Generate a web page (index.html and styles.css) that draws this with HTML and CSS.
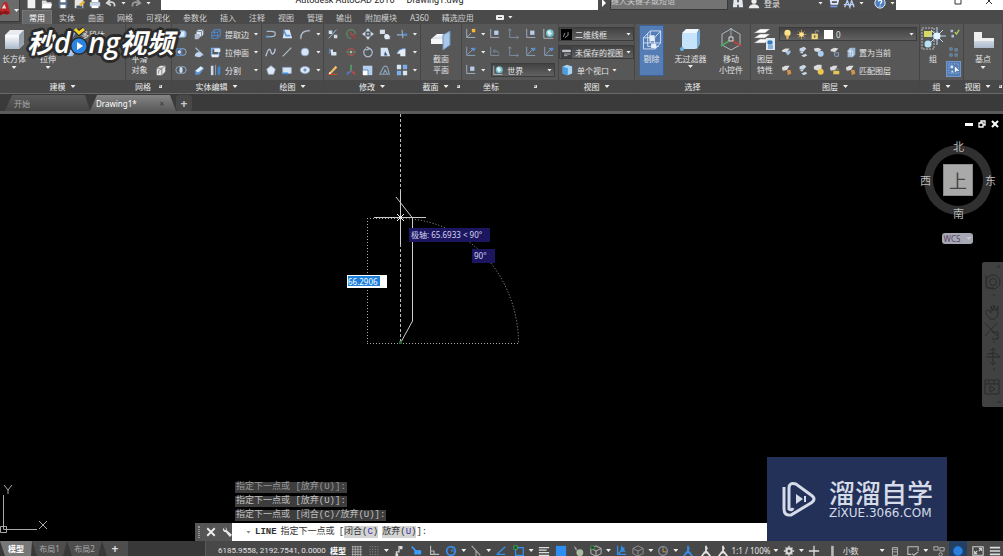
FILE: index.html
```html
<!DOCTYPE html>
<html lang="zh-CN">
<head>
<meta charset="utf-8">
<title>Autodesk AutoCAD 2016 Drawing1.dwg</title>
<link rel="stylesheet" href="styles.css">
</head>
<body>
<svg class="defs" aria-hidden="true">
  <defs>
    <linearGradient id="gw" x1="0" y1="0" x2="0" y2="1"><stop offset="0" stop-color="#fff"/><stop offset="1" stop-color="#a9b9cc"/></linearGradient>
    <linearGradient id="gb" x1="0" y1="0" x2="1" y2="1"><stop offset="0" stop-color="#f4f9ff"/><stop offset="1" stop-color="#7fa9d8"/></linearGradient>
    <symbol id="new" viewBox="0 0 14 14"><path d="M3 1h6l3 3v9H3z" fill="#f2f2f2"/></symbol>
    <symbol id="open" viewBox="0 0 14 14"><path d="M1 4h5l1 2h5v7H1z" fill="#ddd"/><path d="M3 8h10l-2 5H1z" fill="#fff"/></symbol>
    <symbol id="save" viewBox="0 0 14 14"><path d="M2 2h10v11H2z" fill="#59708d"/><path d="M4 2h6v4H4zM4 9h6v4H4z" fill="#fff"/></symbol>
    <symbol id="saveas" viewBox="0 0 14 14"><path d="M2 2h10v11H2z" fill="#e6e6e6"/><path d="M4 10h7v3H4z" fill="#456"/><path d="M7 9l5-5 2 2-5 5z" fill="#e8b63c"/></symbol>
    <symbol id="print" viewBox="0 0 14 14"><path d="M3 2h8v4H3z" fill="#fff"/><path d="M1 6h12v5H1z" fill="#c4d4e5"/><path d="M3 10h8v3H3z" fill="#fff"/></symbol>
    <symbol id="undo" viewBox="0 0 14 14"><path d="M11 11c1-5-3-6-7-4M6 3L2 7l5 3" fill="none" stroke="#d5d5d5" stroke-width="2"/></symbol>
    <symbol id="redo" viewBox="0 0 14 14"><path d="M3 11c-1-5 3-6 7-4M8 3l4 4-5 3" fill="none" stroke="#9a9a9a" stroke-width="2"/></symbol>
    <symbol id="bino" viewBox="0 0 14 14"><path d="M2 2h4v4h2V2h4l1 10H8V9H6v3H1z" fill="#e3e8ee"/></symbol>
    <symbol id="user" viewBox="0 0 14 14"><circle cx="7" cy="5" r="3" fill="#eee"/><path d="M1 13c0-6 12-6 12 0z" fill="#eee"/></symbol>
    <symbol id="cart" viewBox="0 0 14 14"><path d="M1 2h3l1 6h7l1-4H4" fill="none" stroke="#dfe9ff" stroke-width="2"/><path d="M4 10h8v2H4z" fill="#7199e7"/></symbol>
    <symbol id="net" viewBox="0 0 14 14"><path d="M2 12l3-8 3 8 2-8 3 8M1 9h12" fill="none" stroke="#b9cef5" stroke-width="1.5"/></symbol>
    <symbol id="help" viewBox="0 0 14 14"><circle cx="7" cy="7" r="6" fill="#4b7fc4" stroke="#fff"/><path d="M5 5q2-3 4 0q0 2-2 3M7 10v1" fill="none" stroke="#fff" stroke-width="1.5"/></symbol>
    <symbol id="logoA" viewBox="0 0 16 20"><path d="M0 9L4 0h4l4 13-4 1-2-4-4 1-2 2z" fill="#c22424"/><path d="M2 7l3-5 2 5z" fill="#ddd"/><path d="M0 10l3 1 3-2 5 3-3 2-4-1-4 2z" fill="#8d1515"/></symbol>
    <symbol id="cube" viewBox="0 0 28 28"><path d="M5 10l5-5h14v14l-5 5H5z" fill="#e9edf2"/><path d="M5 10h14v14H5z" fill="url(#gw)"/><path d="M19 10l5-5v14l-5 5z" fill="#98a2ae"/></symbol>
    <symbol id="extrude" viewBox="0 0 28 28"><path d="M6 10l7-5 9 4v12l-8 4-8-5z" fill="url(#gb)"/><path d="M14 13v12" stroke="#778"/></symbol>
    <symbol id="face" viewBox="0 0 14 14"><path d="M2 8l6-5 4 3-3 6H3z" fill="url(#gb)"/></symbol>
    <symbol id="mesh" viewBox="0 0 14 14"><path d="M2 5l4-3h6v7l-4 4H2z" fill="#e4e4e4"/><path d="M2 5h6v8M8 5l4-3M4 11c0-4 2-5 4-5" fill="none" stroke="#777"/></symbol>
    <symbol id="union" viewBox="0 0 14 14"><circle cx="5" cy="7" r="4.500" fill="#c5d4e7"/><circle cx="9" cy="7" r="4.500" fill="#8db2dd"/><path d="M3 4h8v6H3z" fill="#e2ecf8"/></symbol>
    <symbol id="subtract" viewBox="0 0 14 14"><circle cx="9" cy="7" r="4" fill="none" stroke="#9bb9dc"/><path d="M2 3h6v8H2z" fill="none" stroke="#4f8fdc"/><circle cx="5" cy="7" r="2" fill="#d9e6f5"/></symbol>
    <symbol id="intersect" viewBox="0 0 14 14"><circle cx="5" cy="7" r="4" fill="none" stroke="#9bb9dc"/><circle cx="9" cy="7" r="4" fill="none" stroke="#9bb9dc"/><path d="M7 4v6" stroke="#e6f2ff" stroke-width="2"/></symbol>
    <symbol id="copyface" viewBox="0 0 14 14"><path d="M6 2h6v6l-2 2H4V4z" fill="#dfe8f2"/><path d="M2 7h6v4l-2 2H2z" fill="#aebdce"/><path d="M4 4h6v6M10 4l2-2" fill="none" stroke="#667789"/></symbol>
    <symbol id="slice" viewBox="0 0 14 14"><path d="M3 2l9 9" stroke="#9cb1cc" stroke-width="1.500"/><path d="M2 12q0-5 6-5l3 2q-1 4-4 4z" fill="#c1d6ee"/></symbol>
    <symbol id="thick" viewBox="0 0 14 14"><path d="M2 8l7-6 4 3-5 7-5 1z" fill="#5d92cf"/><path d="M3 8l6-5 3 2-6 5z" fill="#e8f1fa"/></symbol>
    <symbol id="edge" viewBox="0 0 14 14"><path d="M2 5l3-3h7v7l-3 3H2zM2 5h7v7M9 5l3-3M5 2v7H2M5 9h7" fill="none" stroke="#4f8fdc"/></symbol>
    <symbol id="extface" viewBox="0 0 14 14"><path d="M2 3h8v8H2z" fill="none" stroke="#79abe6" stroke-width="2"/><path d="M5 3h7v4H5zM2 10h8v3H2z" fill="#e5eef8"/></symbol>
    <symbol id="split" viewBox="0 0 14 14"><path d="M1 2h3v11H1z" fill="#cad9eb"/><path d="M9 4l3-2v10l-3 1z" fill="#3f89d9"/><path d="M6.500 1v12" stroke="#9ab"/></symbol>
    <symbol id="pline" viewBox="0 0 14 14"><path d="M2 4h6q4 0 4 3t-4 3H2" fill="none" stroke="#a8b8cc" stroke-width="1.500"/><path d="M1 10h4" stroke="#5f9be0" stroke-width="2"/></symbol>
    <symbol id="helix" viewBox="0 0 14 14"><path d="M4 2h6l3 10H2z" fill="#dbe8f7"/><path d="M3 2l3 7h5" fill="none" stroke="#5b94da" stroke-width="2"/></symbol>
    <symbol id="arc" viewBox="0 0 14 14"><path d="M2 12Q2 3 12 3" fill="none" stroke="#b6c3d4" stroke-width="1.500"/><path d="M1 11h2v2H1zM11 2h2v2h-2z" fill="#999"/></symbol>
    <symbol id="spline" viewBox="0 0 14 14"><path d="M1 12C4 1 6 3 7 7s4 3 5-4" fill="none" stroke="#b8c7d9" stroke-width="1.500"/></symbol>
    <symbol id="line" viewBox="0 0 14 14"><path d="M2 12L12 2" stroke="#bac5d2" stroke-width="1.200"/></symbol>
    <symbol id="circle" viewBox="0 0 14 14"><circle cx="7" cy="7" r="4.500" fill="#d9e7f5" stroke="#8dabd0"/></symbol>
    <symbol id="polygon" viewBox="0 0 14 14"><path d="M7 2l5 4-2 6H4L2 6z" fill="#e0e9f5" stroke="#9db1ca"/></symbol>
    <symbol id="rect" viewBox="0 0 14 14"><path d="M2 4h10v7H2z" fill="#d9e4f1" stroke="#92aed0"/><path d="M2 11h6" stroke="#348be8" stroke-width="2"/></symbol>
    <symbol id="ellipse" viewBox="0 0 14 14"><ellipse cx="7" cy="7" rx="5.500" ry="4" fill="#dfe9f5" stroke="#91aed2"/><path d="M5 7h4M7 5v4" stroke="#3a6da8"/></symbol>
    <symbol id="fillet" viewBox="0 0 14 14"><path d="M2 12L11 2" stroke="#c3cddb"/><path d="M2 3h4v4H2zM8 8h4v4H8z" fill="#d1dceb"/><path d="M6 3l1 4" stroke="#4e90dc"/></symbol>
    <symbol id="gizrot" viewBox="0 0 14 14"><path d="M12 7a5 5 0 1 0-5 5" fill="none" stroke="#608a62" stroke-width="1.500"/><path d="M7 4v4h5" fill="none" stroke="#b24a49" stroke-width="1.500"/><circle cx="11" cy="11" r="1.500" fill="#bd3734"/></symbol>
    <symbol id="move" viewBox="0 0 14 14"><path d="M7 0l3 4H4zM7 14l3-4H4zM0 7l4-3v6zM14 7l-4-3v6z" fill="#c9d5e4"/><circle cx="7" cy="7" r="1.500" fill="#9aafc8"/></symbol>
    <symbol id="copy" viewBox="0 0 14 14"><path d="M1 2h6v5H1z" fill="#d5e0ed"/><path d="M6 3l2 6h5v4H7V8" fill="#a6bfdc"/><circle cx="9" cy="10" r="3" fill="#e3ebf4"/></symbol>
    <symbol id="trim" viewBox="0 0 14 14"><path d="M1 8h12M7 2l1 10" stroke="#96aeca" stroke-width="1.300"/><path d="M8 7h5" stroke="#3987dd" stroke-width="1.500"/></symbol>
    <symbol id="corner" viewBox="0 0 14 14"><path d="M4 4h3v3h4v4H5z" fill="#d8e4f2"/><path d="M3 3v6" stroke="#5f9ade"/></symbol>
    <symbol id="gizscale" viewBox="0 0 14 14"><circle cx="7" cy="7" r="4" fill="none" stroke="#aa4c4d" stroke-width="1.500"/><path d="M1 7h12M7 4v7" stroke="#53966a"/><circle cx="7" cy="7" r="1" fill="#fff"/></symbol>
    <symbol id="rotate" viewBox="0 0 14 14"><path d="M5 3a5 5 0 1 0 4 0M5 1l4 2-4 2" fill="none" stroke="#a8bbd2" stroke-width="1.500"/></symbol>
    <symbol id="mirror" viewBox="0 0 14 14"><path d="M2 2h8l3 10H2z" fill="#d5e5f6"/><path d="M7 6l3 5H6z" fill="#457"/></symbol>
    <symbol id="chamfer" viewBox="0 0 14 14"><path d="M1 9q2-6 10-6v9H5V9z" fill="#e5edf6"/><path d="M1 9q2-6 10-6" fill="none" stroke="#5795dd"/></symbol>
    <symbol id="erase" viewBox="0 0 14 14"><path d="M3 10l7-8 2 2-7 7z" fill="#f2bf68"/><path d="M1 12h11" stroke="#c8502a" stroke-width="1.500"/><path d="M2 12l1-3 2 2z" fill="#fff"/></symbol>
    <symbol id="gizmove" viewBox="0 0 14 14"><path d="M7 1v7" stroke="#53a064" stroke-width="2"/><path d="M7 8l-5 4" stroke="#4c7bd0" stroke-width="2"/><path d="M7 8l5 4" stroke="#bd4a46" stroke-width="2"/></symbol>
    <symbol id="scale" viewBox="0 0 14 14"><path d="M1 2h11v11H1z" fill="#b7d0ed"/><path d="M1 7h6v6H1z" fill="#fff"/><path d="M1 7h6v6" fill="none" stroke="#487fb9"/></symbol>
    <symbol id="offset" viewBox="0 0 14 14"><path d="M1 12l4-8q3-3 5 0l2 8zM5 12l2-5 3 5" fill="none" stroke="#8fa3ba" stroke-width="1.300"/></symbol>
    <symbol id="array" viewBox="0 0 14 14"><path d="M1 1h5v5H1zM8 8h5v5H8z" fill="#d9e5f3"/><path d="M8 1h5v5H8zM1 8h5v5H1z" fill="#7caeea"/></symbol>
    <symbol id="section" viewBox="0 0 28 28"><path d="M4 14l6-5h13l-5 6v4H4z" fill="url(#gw)"/><path d="M4 14h12v5H4z" fill="#f7f7f7"/><path d="M16 10l7-4v14l-7 5z" fill="#a8c8ea" stroke="#6d90b5"/></symbol>
    <symbol id="ucs" viewBox="0 0 14 14"><path d="M2 1v10h10M0 3l2-2 2 2M10 9l2 2-2 2" fill="none" stroke="#8294ab"/></symbol>
    <symbol id="ucsnew" viewBox="0 0 14 14"><path d="M2 1v10h10M2 11l5-5" fill="none" stroke="#a9b9cc"/><path d="M8 1h4v4H8z" fill="#ffb42e"/></symbol>
    <symbol id="ucsobj" viewBox="0 0 14 14"><path d="M2 1v10h10" fill="none" stroke="#a9b9cc"/><path d="M6 3h5v5H6z" fill="#b8cde8"/></symbol>
    <symbol id="ucsx" viewBox="0 0 14 14"><path d="M2 1v10h10M3 10l7-7M7 3h3v3" fill="none" stroke="#8fa9c9"/><path d="M9 2h3v3H9z" fill="#4c91df"/></symbol>
    <symbol id="ucsback" viewBox="0 0 14 14"><path d="M2 1v10h10M5 6h4q2 0 2 3M7 4L5 6l2 2" fill="none" stroke="#8294ab"/></symbol>
    <symbol id="world" viewBox="0 0 14 14"><path d="M1 1v11h11" fill="none" stroke="#b7c5d6"/><circle cx="8" cy="6" r="4.500" fill="#6fbecb"/><path d="M5 4q3-3 4 0t2 2q-3 2-3 3T5 6z" fill="#dbeff1"/></symbol>
    <symbol id="vs" viewBox="0 0 14 14"><path d="M0 0h14v14H0z" fill="#000"/><path d="M3 10l2-5M9 4v4l-4 3" fill="none" stroke="#bbb"/></symbol>
    <symbol id="views" viewBox="0 0 14 14"><path d="M0 0h14v14H0z" fill="#3d4043"/><path d="M2 4h10v2H2zM4 9h8M4 11h4" fill="#ddd" stroke="#ccc"/></symbol>
    <symbol id="vport" viewBox="0 0 14 14"><path d="M2 3l5-2 6 2v8l-5 2-6-2z" fill="#a7d4f5"/><path d="M2 3l6 2v8l-6-2z" fill="#4a9de0"/></symbol>
    <symbol id="cull" viewBox="0 0 28 28"><path d="M4 12l8-8h12v14l-6 7H4zM4 12h13v13M17 12l7-8M12 4v14H4M12 18h12M9 7v15h13" fill="none" stroke="#dce9fa"/><path d="M11 9h6v7h-6zM13 19h6v5h-6z" fill="#e5edf7"/></symbol>
    <symbol id="nofilter" viewBox="0 0 28 28"><rect x="5" y="7" width="16" height="17" rx="3" fill="#c5e4fb"/><path d="M5 8l4-4h13l-2 4z" fill="#eff8ff"/><path d="M20 8l3-4v15l-3 5z" fill="#75a9d8"/><circle cx="5" cy="24" r="2" fill="#67b9f1"/></symbol>
    <symbol id="gizmo" viewBox="0 0 28 28"><path d="M14 4l9 5v11l-9 5-9-5V9z" fill="none" stroke="#aeb7bf"/><path d="M14 12V3M11 6l3-3 3 3" stroke="#9aa" fill="none"/><path d="M12 16l-8 5" stroke="#4da65c" stroke-width="2"/><path d="M16 16l8 5" stroke="#ba433e" stroke-width="2"/><path d="M12 12h4v4h-4z" fill="#555" stroke="#ddd"/></symbol>
    <symbol id="layers" viewBox="0 0 28 28"><path d="M3 8l6-4h10l-5 4zM3 13l6-4h10l-5 4zM3 18l6-4h9l-4 4z" fill="#fff" stroke="#777" stroke-width=".500"/><path d="M15 13h9v12h-9z" fill="#dce8f4"/><path d="M17 16h4v3h-4zM17 21h5M17 23h5" fill="#377bbd" stroke="#377bbd"/></symbol>
    <symbol id="bulb" viewBox="0 0 14 14"><circle cx="7" cy="5" r="4" fill="#ffe288"/><path d="M5 8h4l-1 5H6z" fill="#e8b55a"/></symbol>
    <symbol id="sun" viewBox="0 0 14 14"><path d="M7 1v12M1 7h12M3 3l8 8M11 3l-8 8" stroke="#d9ab61"/><circle cx="7" cy="7" r="3" fill="#ffe391"/></symbol>
    <symbol id="lock" viewBox="0 0 14 14"><path d="M7 6V3q3-3 4 1" fill="none" stroke="#888" stroke-width="1.500"/><path d="M2 6h8v7H2z" fill="#efd976"/><path d="M5 8h2v3H5z" fill="#766"/></symbol>
    <symbol id="lay1" viewBox="0 0 14 14"><path d="M1 5l4-2h5l-3 4H2z" fill="#ddd"/><path d="M5 7l6-2v3l-3 3z" fill="#a5c7eb"/></symbol>
    <symbol id="lay2" viewBox="0 0 14 14"><path d="M3 3l5-2 3 2-3 3H3zM3 7l5-1-2 3zM5 11l5-2 2 2-4 2z" fill="#c9d7e8"/></symbol>
    <symbol id="lay3" viewBox="0 0 14 14"><path d="M1 3l5-1 4 2-4 3-4-1z" fill="#ddd"/><circle cx="9" cy="9" r="3.500" fill="#a9cdf0"/></symbol>
    <symbol id="lay4" viewBox="0 0 14 14"><path d="M2 4l4-2 5 1-4 4-5-1z" fill="#ddd"/><path d="M6 8h5v4H7z" fill="none" stroke="#8fafd2"/></symbol>
    <symbol id="lay5" viewBox="0 0 14 14"><path d="M3 5l3-3h6v8l-3 3H3z" fill="#9ab7d4"/><path d="M3 6h6v6M6 3v8" stroke="#e6edf5" fill="none"/></symbol>
    <symbol id="layy" viewBox="0 0 14 14"><path d="M1 3l4-2h5v5L6 8 1 6z" fill="#ddd"/><circle cx="9" cy="9" r="3.500" fill="#ecc64e"/></symbol>
    <symbol id="layo" viewBox="0 0 14 14"><path d="M1 4l4-2h5L7 7 2 8z" fill="#ddd"/><path d="M7 7h4l1 4-4 2z" fill="#dc9245"/></symbol>
    <symbol id="layk" viewBox="0 0 14 14"><path d="M1 4l4-2h5L7 7 2 8z" fill="#ddd"/><path d="M7 8V6q3-2 4 1" fill="none" stroke="#aaa"/><path d="M5 8h7v4H5z" fill="#e8c655"/></symbol>
    <symbol id="group" viewBox="0 0 28 28"><path d="M3 3h12v21H3z" fill="none" stroke="#bbb" stroke-dasharray="2 1"/><path d="M5 6h8v6H5z" fill="#d9d75d"/><circle cx="9" cy="19" r="3.500" fill="#b7e1f5"/><path d="M18 2v18M9 11h18M12 5l12 12M24 5L12 17" stroke="#b4dbff"/><circle cx="18" cy="11" r="3.500" fill="#e4f4ff"/></symbol>
    <symbol id="gedit" viewBox="0 0 14 14"><path d="M3 2h3v3H3zM4 8h3v3H4z" fill="#aabed2"/><path d="M8 5l2 2 3-5" fill="none" stroke="#b7d95a" stroke-width="1.500"/></symbol>
    <symbol id="ungroup" viewBox="0 0 14 14"><path d="M2 2h3v3H2zM2 9h3v3H2zM8 3h3v3H8zM8 9h3v3H8z" fill="#53789d" stroke="#9ab" stroke-width=".500"/></symbol>
    <symbol id="gsel" viewBox="0 0 14 14"><path d="M1 1h11v11H1z" fill="none" stroke="#bcd7f3" stroke-dasharray="1 2"/><path d="M3 3h3v3H3zM4 9h2v2H4z" fill="#d8ebff"/><path d="M8 4v7l2-2h3z" fill="#fff"/></symbol>
    <symbol id="base" viewBox="0 0 28 28"><path d="M5 7h8v6h12v10H5z" fill="url(#gw)"/><path d="M5 7h8v6h12v3H5z" fill="#eee"/></symbol>
    <symbol id="wrench" viewBox="0 0 14 14"><path d="M2 1q-2 3 1 6h2l6 7 3-3-7-6Q7 1 4 0l2 3-2 2z" fill="#e9e9e9"/></symbol>
    <symbol id="grid" viewBox="0 0 14 14"><path d="M2 1v12M5 1v12M8 1v12M11 1v12M1 2h12M1 5h12M1 8h12M1 11h12" stroke="#b0b0b0"/></symbol>
    <symbol id="dots" viewBox="0 0 14 14"><path d="M2 2h10M2 5h10M2 8h10M2 11h10" stroke="#aaa" stroke-dasharray="1 2"/></symbol>
    <symbol id="infer" viewBox="0 0 14 14"><path d="M4 13V8h3V2h4" fill="none" stroke="#d2d2d2" stroke-width="1.500"/><path d="M3 10h3v3H3zM8 2h3v3H8z" fill="#ddd"/></symbol>
    <symbol id="dyn" viewBox="0 0 14 14"><path d="M2 2l5 5" stroke="#3c9cff" stroke-width="2"/><path d="M5 6h8v5H5z" fill="#3c9cff"/></symbol>
    <symbol id="ortho" viewBox="0 0 14 14"><path d="M3 1v10h10M3 7h4v4" fill="none" stroke="#bbb" stroke-width="1.300"/></symbol>
    <symbol id="polar" viewBox="0 0 14 14"><circle cx="7" cy="7" r="5" fill="none" stroke="#348fea" stroke-width="2"/><path d="M7 7l4-5M7 7h6" stroke="#348fea"/></symbol>
    <symbol id="iso" viewBox="0 0 14 14"><path d="M2 1l10 11M7 6v7" stroke="#aaa" stroke-width="1.300"/></symbol>
    <symbol id="track" viewBox="0 0 14 14"><path d="M2 11L12 2M2 11h10" stroke="#348fea" stroke-width="1.500"/></symbol>
    <symbol id="osnap" viewBox="0 0 14 14"><path d="M3 3h9v9H3z" fill="none" stroke="#348fea" stroke-width="1.500"/><path d="M1 1h4v4H1z" fill="#114b22" stroke="#42b468"/></symbol>
    <symbol id="lwt" viewBox="0 0 14 14"><path d="M1 3h12M1 6h9M1 9h12M1 12h12" stroke="#ddd" stroke-width="1.500"/></symbol>
    <symbol id="transp" viewBox="0 0 14 14"><path d="M1 1h12v12H1z" fill="#2e8df0"/></symbol>
    <symbol id="cycle" viewBox="0 0 14 14"><path d="M1 1l3 3v3z" fill="#ddd"/><circle cx="8" cy="9" r="4" fill="#a9bda2"/></symbol>
    <symbol id="cube3" viewBox="0 0 14 14"><path d="M7 1l6 3v6l-6 3-6-3V4zM1 4l6 3 6-3M7 7v6" fill="none" stroke="#c7c7c7"/><path d="M1 1h4v4H1z" fill="#165024" stroke="#5dbf71" stroke-width=".500"/></symbol>
    <symbol id="cube4" viewBox="0 0 14 14"><path d="M7 1l6 3v6l-6 3-6-3V4zM1 4l6 3 6-3M7 7v6" fill="none" stroke="#999"/></symbol>
    <symbol id="ducs" viewBox="0 0 14 14"><path d="M3 1v10h10M3 11l8-8M8 2l3 5h-4z" fill="none" stroke="#348fea" stroke-width="1.500"/></symbol>
    <symbol id="giz" viewBox="0 0 14 14"><circle cx="7" cy="7" r="5" fill="none" stroke="#8394aa" stroke-width="1.500"/><path d="M7 3v5h4" fill="none" stroke="#e59b45"/></symbol>
    <symbol id="man" viewBox="0 0 14 14"><path d="M7 1v6l-5 6M7 7l5 6M4 9h6M6 4h3" fill="none" stroke="currentColor" stroke-width="2"/></symbol>
    <symbol id="gear" viewBox="0 0 14 14"><circle cx="7" cy="7" r="3" fill="none" stroke="#ddd" stroke-width="2.500"/><path d="M7 1v2M7 11v2M1 7h2M11 7h2M3 3l1 1M10 10l1 1M11 3l-1 1M4 10l-1 1" stroke="#ddd" stroke-width="1.500"/></symbol>
    <symbol id="plus" viewBox="0 0 14 14"><path d="M7 1v12M1 7h12" stroke="#ddd" stroke-width="1.500"/></symbol>
    <symbol id="units" viewBox="0 0 14 14"><path d="M6 1h3v12H6z" fill="#bbb"/></symbol>
    <symbol id="props" viewBox="0 0 14 14"><path d="M4 3h6v9H4zM4 5h6M4 8h6" fill="none" stroke="#bbb"/></symbol>
    <symbol id="screen" viewBox="0 0 14 14"><path d="M5 11H1V2h12v5M6 10l2 2 5-4" fill="none" stroke="#bbb" stroke-width="1.300"/></symbol>
    <symbol id="isolate" viewBox="0 0 14 14"><path d="M1 2h5v4H1zM8 3h5v4H8z" fill="none" stroke="#bbb"/><circle cx="9" cy="11" r="2" fill="none" stroke="#bbb"/></symbol>
    <symbol id="hw" viewBox="0 0 14 14"><circle cx="7" cy="7" r="5.500" fill="#2b80dc" stroke="#1469c3"/></symbol>
    <symbol id="clean" viewBox="0 0 14 14"><path d="M1 2h12v10H1zM8 4h3v3M6 10H3V7M8 7l3-3M6 7l-3 3" fill="none" stroke="#ccc" stroke-width="1.300"/></symbol>
    <symbol id="menu" viewBox="0 0 14 14"><path d="M1 3h12M1 7h12M1 11h12" stroke="#ddd" stroke-width="2"/></symbol>
  </defs>
</svg>

<div class="app">
  <header class="title">
    <div class="title-in">
      <div class="qat">
        <button aria-label="新建"><svg class="i"><use href="#new"/></svg></button>
        <button aria-label="打开"><svg class="i"><use href="#open"/></svg></button>
        <button aria-label="保存"><svg class="i"><use href="#save"/></svg></button>
        <button aria-label="另存为"><svg class="i"><use href="#saveas"/></svg></button>
        <button aria-label="打印"><svg class="i"><use href="#print"/></svg></button>
        <button aria-label="放弃"><svg class="i"><use href="#undo"/></svg></button>
        <i class="dn"></i>
        <button aria-label="重做"><svg class="i"><use href="#redo"/></svg></button>
        <i class="dn"></i>
      </div>
      <div class="caption"><span>Autodesk AutoCAD 2016</span><span>Drawing1.dwg</span></div>
      <div class="info">
        <span class="play"></span>
        <input class="search" aria-label="搜索" placeholder="键入关键字或短语">
        <button aria-label="查找"><svg class="i"><use href="#bino"/></svg></button>
        <button class="login"><svg class="i"><use href="#user"/></svg>登录</button>
        <i class="dn login-dn"></i>
        <button aria-label="商店"><svg class="i"><use href="#cart"/></svg></button>
        <button aria-label="连接"><svg class="i"><use href="#net"/></svg></button>
        <i class="dn"></i>
        <button class="help" aria-label="帮助"><svg class="i"><use href="#help"/></svg></button>
        <i class="dn"></i>
      </div>
      <div class="winbtns"><button aria-label="最大化"><svg viewBox="0 0 8 8"><path d="M1 1h6v6H1z" fill="none" stroke="#333"/></svg></button><button aria-label="关闭"><svg viewBox="0 0 8 8"><path d="M1 1l6 6M7 1L1 7" stroke="#333"/></svg></button></div>
    </div>
  </header>
  <button class="appbtn" aria-label="应用程序菜单"><svg><use href="#logoA"/></svg><i class="dn"></i></button>

  <nav class="tabs">
    <button class="on">常用</button><button>实体</button><button>曲面</button><button>网格</button><button>可视化</button><button>参数化</button><button>插入</button><button>注释</button><button>视图</button><button>管理</button><button>输出</button><button>附加模块</button><button>A360</button><button>精选应用</button>
    <button class="mini" aria-label="最小化功能区"><span></span><i class="dn"></i></button>
  </nav>

  <main class="ribbon">
    <section class="panel">
      <div class="body model">
        <button class="big"><svg><use href="#cube"/></svg>长方体<i class="dn"></i></button>
        <button class="big"><svg><use href="#extrude"/></svg>拉伸<i class="dn"></i></button>
        <div class="rows">
          <button><svg class="i"><use href="#face"/></svg>多段体</button>
          <button aria-label="按住并拖动"><svg class="i"><use href="#face"/></svg></button>
        </div>
      </div>
      <h2>建模<i class="dn"></i></h2>
    </section>
    <section class="panel">
      <div class="body meshes">
        <button class="big"><svg><use href="#cube"/></svg>平滑<br>对象</button>
        <div class="rows end"><button aria-label="网格"><svg class="i"><use href="#mesh"/></svg></button></div>
      </div>
      <h2>网格<i class="corner"></i></h2>
    </section>
    <section class="panel">
      <div class="body g-solid">
        <button aria-label="并集"><svg class="i"><use href="#union"/></svg></button><button aria-label="复制面"><svg class="i"><use href="#copyface"/></svg></button><button class="wide"><svg class="i"><use href="#edge"/></svg>提取边</button><i class="dn"></i>
        <button aria-label="差集"><svg class="i"><use href="#subtract"/></svg></button><button aria-label="剖切"><svg class="i"><use href="#slice"/></svg></button><button class="wide"><svg class="i"><use href="#extface"/></svg>拉伸面</button><i class="dn"></i>
        <button aria-label="交集"><svg class="i"><use href="#intersect"/></svg></button><button aria-label="加厚"><svg class="i"><use href="#thick"/></svg></button><button class="wide"><svg class="i"><use href="#split"/></svg>分割</button><i class="dn near"></i>
      </div>
      <h2>实体编辑<i class="dn"></i></h2>
    </section>
    <section class="panel">
      <div class="body g-draw">
        <button aria-label="多段线"><svg class="i"><use href="#pline"/></svg></button><button aria-label="螺旋"><svg class="i"><use href="#helix"/></svg></button><button aria-label="圆弧"><svg class="i"><use href="#arc"/></svg></button><i class="dn"></i>
        <button aria-label="样条曲线"><svg class="i"><use href="#spline"/></svg></button><button aria-label="直线"><svg class="i"><use href="#line"/></svg></button><button aria-label="圆"><svg class="i"><use href="#circle"/></svg></button><i class="dn"></i>
        <button aria-label="多边形"><svg class="i"><use href="#polygon"/></svg></button><button aria-label="矩形"><svg class="i"><use href="#rect"/></svg></button><button aria-label="椭圆"><svg class="i"><use href="#ellipse"/></svg></button><i class="dn"></i>
      </div>
      <h2>绘图<i class="dn"></i></h2>
    </section>
    <section class="panel">
      <div class="body g-mod">
        <button aria-label="圆角边"><svg class="i"><use href="#fillet"/></svg></button><button aria-label="三维旋转"><svg class="i"><use href="#gizrot"/></svg></button><button aria-label="移动"><svg class="i"><use href="#move"/></svg></button><button aria-label="复制"><svg class="i"><use href="#copy"/></svg></button><button aria-label="修剪"><svg class="i"><use href="#trim"/></svg></button><i class="dn"></i>
        <button aria-label="三维对齐"><svg class="i"><use href="#corner"/></svg></button><button aria-label="三维缩放"><svg class="i"><use href="#gizscale"/></svg></button><button aria-label="旋转"><svg class="i"><use href="#rotate"/></svg></button><button aria-label="镜像"><svg class="i"><use href="#mirror"/></svg></button><button aria-label="圆角"><svg class="i"><use href="#chamfer"/></svg></button><i class="dn"></i>
        <button aria-label="删除"><svg class="i"><use href="#erase"/></svg></button><button aria-label="三维移动"><svg class="i"><use href="#gizmove"/></svg></button><button aria-label="缩放"><svg class="i"><use href="#scale"/></svg></button><button aria-label="偏移"><svg class="i"><use href="#offset"/></svg></button><button aria-label="阵列"><svg class="i"><use href="#array"/></svg></button><i class="dn"></i>
      </div>
      <h2>修改<i class="dn"></i></h2>
    </section>
    <section class="panel">
      <div class="body one"><button class="big"><svg><use href="#section"/></svg>截面<br>平面</button></div>
      <h2>截面<i class="dn"></i><i class="corner"></i></h2>
    </section>
    <section class="panel">
      <div class="body g-ucs">
        <button aria-label="UCS"><svg class="i"><use href="#ucsnew"/></svg></button><i class="dn"></i><button aria-label="命名UCS"><svg class="i"><use href="#ucsobj"/></svg></button><button aria-label="原点"><svg class="i"><use href="#ucs"/></svg></button><button aria-label="视图UCS"><svg class="i"><use href="#ucsobj"/></svg></button><button aria-label="世界"><svg class="i"><use href="#world"/></svg></button>
        <button aria-label="X轴"><svg class="i"><use href="#ucsx"/></svg></button><i class="dn"></i><button aria-label="上一个"><svg class="i"><use href="#ucsback"/></svg></button><button aria-label="Z轴"><svg class="i"><use href="#ucs"/></svg></button><button aria-label="三点"><svg class="i"><use href="#ucsx"/></svg></button><button aria-label="面"><svg class="i"><use href="#ucsx"/></svg></button>
        <button aria-label="对象"><svg class="i"><use href="#ucsobj"/></svg></button><i class="dn"></i>
        <label class="combo span4"><svg class="i"><use href="#world"/></svg><select aria-label="坐标系"><option>世界</option></select><i class="dn"></i></label>
      </div>
      <h2>坐标<i class="corner far"></i></h2>
    </section>
    <section class="panel">
      <div class="body views">
        <label class="combo"><svg class="i"><use href="#vs"/></svg><select aria-label="视觉样式"><option>二维线框</option></select><i class="dn"></i></label>
        <label class="combo"><svg class="i"><use href="#views"/></svg><select aria-label="视图"><option>未保存的视图</option></select><i class="dn"></i></label>
        <button class="wide vp"><svg class="i"><use href="#vport"/></svg>单个视口<i class="dn"></i></button>
      </div>
      <h2>视图<i class="dn"></i></h2>
    </section>
    <section class="panel">
      <div class="body select">
        <button class="big active"><svg><use href="#cull"/></svg>剔除</button>
        <button class="big"><svg><use href="#nofilter"/></svg>无过滤器<i class="dn"></i></button>
        <button class="big"><svg><use href="#gizmo"/></svg>移动<br>小控件</button>
      </div>
      <h2>选择</h2>
    </section>
    <section class="panel">
      <div class="body layer">
        <button class="big"><svg><use href="#layers"/></svg>图层<br>特性</button>
        <div class="layer-tools">
          <label class="combo"><svg class="i"><use href="#bulb"/></svg><svg class="i"><use href="#sun"/></svg><svg class="i"><use href="#lock"/></svg><span class="swatch"></span><select aria-label="图层"><option>0</option></select><i class="dn"></i></label>
          <div class="strip"><button aria-label="关闭图层"><svg class="i"><use href="#lay1"/></svg></button><button aria-label="隔离"><svg class="i"><use href="#lay2"/></svg></button><button aria-label="冻结"><svg class="i"><use href="#lay3"/></svg></button><button aria-label="锁定"><svg class="i"><use href="#lay4"/></svg></button><button class="wide"><svg class="i"><use href="#lay5"/></svg>置为当前</button></div>
          <div class="strip"><button aria-label="打开图层"><svg class="i"><use href="#layo"/></svg></button><button aria-label="取消隔离"><svg class="i"><use href="#lay2"/></svg></button><button aria-label="解冻"><svg class="i"><use href="#layy"/></svg></button><button aria-label="解锁"><svg class="i"><use href="#layk"/></svg></button><button class="wide"><svg class="i"><use href="#layo"/></svg>匹配图层</button></div>
        </div>
      </div>
      <h2>图层<i class="dn"></i></h2>
    </section>
    <section class="panel">
      <div class="body grp">
        <button class="big"><svg><use href="#group"/></svg>组</button>
        <div class="rows"><button aria-label="组编辑"><svg class="i"><use href="#gedit"/></svg></button><button aria-label="解除编组"><svg class="i"><use href="#ungroup"/></svg></button><button class="active" aria-label="组选择"><svg class="i"><use href="#gsel"/></svg></button></div>
      </div>
      <h2>组<i class="dn"></i></h2>
    </section>
    <section class="panel">
      <div class="body one"><button class="big"><svg><use href="#base"/></svg>基点<i class="dn"></i></button></div>
      <h2>视图<i class="dn"></i><i class="corner"></i></h2>
    </section>
  </main>

  <div class="wm" aria-label="秒dong视频"><span>秒</span><span class="lat">d</span><svg viewBox="0 0 18 34"><path d="M6 5l3 3 5-4" fill="none" stroke="#222" stroke-width="5"/><path d="M5 4l4 4 5-4" fill="none" stroke="#f5d326" stroke-width="3"/><circle cx="9" cy="21" r="9" fill="#2b2b2b"/><circle cx="9" cy="21" r="7.500" fill="#2c83e4"/><path d="M7 17l6 4-6 4z" fill="#fff"/></svg><span class="lat">ng</span><span>视频</span></div>

  <nav class="files">
    <button class="file">开始</button>
    <button class="file cur">Drawing1*<span>×</span></button>
    <button class="add" aria-label="新图形">+</button>
  </nav>

  <div class="canvas">
    <svg class="draw" aria-label="图形">
      <g fill="none" stroke="#b9b9b9">
        <path d="M400.500 0V230" stroke-dasharray="3 2"/>
        <path d="M367 104.500H400M367.500 104V229M367 229.500H518M400 104.500A118 125 0 0 1 518.500 229.500" stroke="#aaa" stroke-dasharray="1 2"/>
        <path d="M374 103.500H426M400.500 77V131" stroke="#ccc"/>
        <path d="M396 83L412.500 104V207L400.500 229" stroke="#ccc"/>
        <path d="M397 100l7 7M404 100l-7 7" stroke="#fff"/>
      </g>
      <path d="M399 227h3v3h-3z" fill="#276637"/>
    </svg>
    <div class="tip polar">极轴: 65.6933 &lt; 90°</div>
    <div class="tip angle">90°</div>
    <input class="dynin" aria-label="长度" value="66.2906">
    <svg class="ucsicon" viewBox="0 0 50 56" aria-label="UCS"><path d="M3.500 10V44.500H37M.500 41.500h6v6h-6zM4 0l4 5 4-5M8 5v4M39 36l8 8M47 36l-8 8" fill="none" stroke="#aaa"/></svg>
    <div class="docbtns"><button class="min" aria-label="最小化"></button><button aria-label="还原"><svg viewBox="0 0 8 8"><path d="M3 3V1h4v4H5M1 3h4v4H1z" fill="none" stroke="#fff" stroke-width="1.300"/></svg></button><button aria-label="关闭"><svg viewBox="0 0 8 8"><path d="M1 1l6 6M7 1L1 7" stroke="#fff" stroke-width="2"/></svg></button></div>
    <div class="viewcube"><span class="n">北</span><span class="w">西</span><button>上</button><span class="e">东</span><span class="s">南</span></div>
    <button class="wcs">WCS<i class="dn"></i></button>
    <svg class="navbar" viewBox="0 0 21 145" aria-label="导航栏"><g fill="none" stroke="#2a2a2a"><path d="M15 3l3 3M18 3l-3 3"/><circle cx="11" cy="20" r="7"/><circle cx="11" cy="20" r="3.500"/><path d="M4 13v13h8M11 33h2M5 53q-3-4 1-5l3 3V44l2 5 1-6 2 6 2-5v8q-2 7-8 5zM3 61l12 13M15 61L3 74M10 70h6v7h-6M11 80h2M11 86v17M4 95h14M8 89l3-3 3 3M8 100l3 3 3-3M5 92q12-3 12 4M11 107h2M3 118h14v14H3zM3 122h14M7 118v4M12 118v4M8 124l5 3-5 3zM15 140h4"/></g></svg>
    <div class="history"><p>指定下一点或 [放弃(U)]:</p><p>指定下一点或 [放弃(U)]:</p><p>指定下一点或 [闭合(C)/放弃(U)]:</p></div>
    <div class="cmd">
      <div class="cmdtools"><span class="grip"></span><button aria-label="关闭"><svg viewBox="0 0 8 8"><path d="M1 1l6 6M7 1L1 7" stroke="#eee" stroke-width="1.500"/></svg></button><button aria-label="自定义"><svg class="i"><use href="#wrench"/></svg></button></div>
      <div class="cmdline"><i class="dn"></i><b>LINE</b><span>指定下一点或</span><span class="opts">[<button>闭合(<u>C</u>)</button></span><span class="opts"><button>放弃(<u>U</u>)</button>]:</span></div>
    </div>
    <div class="brand">
      <svg viewBox="0 0 34 36" fill="none" stroke="#d5dbe8" stroke-width="3"><path d="M2 6v22q0 7 7 6l20-12q6-4 0-8L14 3Q7 1 7 7v21q3 2 4-1"/><path d="M14 13l7 5-7 5z" fill="#d5dbe8" stroke="none"/><path d="M23 15v6" stroke-width="2"/></svg>
      <div><strong>溜溜自学</strong><small>ZiXUE.3066.COM</small></div>
    </div>
  </div>

  <footer class="status">
    <nav class="layouts"><button class="on">模型</button><button>布局1</button><button>布局2</button><button class="add" aria-label="新布局">+</button></nav>
    <div class="bar">
      <span class="coords">6185.9558, 2192.7541, 0.0000</span>
      <button class="space">模型</button>
      <div class="toggles">
        <button aria-label="栅格"><svg class="i"><use href="#grid"/></svg></button><button aria-label="捕捉"><svg class="i"><use href="#dots"/></svg></button><i class="dn"></i>
        <button aria-label="推断约束"><svg class="i"><use href="#infer"/></svg></button><button aria-label="动态输入"><svg class="i"><use href="#dyn"/></svg></button><button aria-label="正交"><svg class="i"><use href="#ortho"/></svg></button><button aria-label="极轴追踪"><svg class="i"><use href="#polar"/></svg></button><i class="dn"></i>
        <button aria-label="等轴测"><svg class="i"><use href="#iso"/></svg></button><i class="dn"></i>
        <button aria-label="对象追踪"><svg class="i"><use href="#track"/></svg></button><button aria-label="对象捕捉"><svg class="i"><use href="#osnap"/></svg></button><i class="dn"></i>
        <button aria-label="线宽"><svg class="i"><use href="#lwt"/></svg></button><button aria-label="透明度"><svg class="i"><use href="#transp"/></svg></button><button aria-label="选择循环"><svg class="i"><use href="#cycle"/></svg></button><button aria-label="三维捕捉"><svg class="i"><use href="#cube3"/></svg></button><i class="dn"></i>
        <button aria-label="动态UCS"><svg class="i"><use href="#ducs"/></svg></button><button aria-label="过滤"><svg class="i"><use href="#cube4"/></svg></button><i class="dn"></i>
        <button aria-label="小控件"><svg class="i"><use href="#giz"/></svg></button><i class="dn"></i>
        <button class="blue" aria-label="注释可见性"><svg class="i"><use href="#man"/></svg></button><button aria-label="自动缩放"><svg class="i"><use href="#man"/></svg></button><button aria-label="注释比例"><svg class="i"><use href="#man"/></svg></button>
      </div>
      <button class="scale">1:1 / 100%<i class="dn"></i></button>
      <div class="toggles last">
        <button aria-label="工作空间"><svg class="i"><use href="#gear"/></svg></button><i class="dn"></i><button aria-label="注释监视器"><svg class="i"><use href="#plus"/></svg></button><button aria-label="单位"><svg class="i"><use href="#units"/></svg></button>
        <button class="unit">小数<i class="dn"></i></button>
        <button aria-label="快捷特性"><svg class="i"><use href="#props"/></svg></button><button aria-label="锁定界面"><svg class="i"><use href="#screen"/></svg></button><i class="dn"></i><button aria-label="隔离对象"><svg class="i"><use href="#isolate"/></svg></button><button class="hw" aria-label="硬件加速"><svg class="i"><use href="#hw"/></svg></button><button aria-label="全屏"><svg class="i"><use href="#clean"/></svg></button><button aria-label="自定义"><svg class="i"><use href="#menu"/></svg></button>
      </div>
    </div>
  </footer>
</div>
</body>
</html>
```

FILE: styles.css
```css
* { box-sizing: border-box; }
html, body { height: 100%; margin: 0; }
body { background: #000; color: #e4e4e4; font: 8px/11px "Noto Sans", "Noto Sans CJK SC", sans-serif; overflow: hidden; }
button, input, select { font: inherit; color: inherit; background: none; border: 0; padding: 0; margin: 0; white-space: nowrap; }
button { display: flex; align-items: center; justify-content: center; }
svg { display: block; flex: none; }
.defs { position: absolute; width: 0; height: 0; }
.i { width: 12px; height: 12px; }
.dn { flex: none; width: 5px; height: 3px; background: #eee; clip-path: polygon(0 0, 100% 0, 50% 100%); }
.app { position: relative; display: flex; flex-direction: column; height: 100vh; }

.title { flex: none; height: 10px; overflow: hidden; }
.title-in { display: flex; height: 26px; margin-top: -10px; align-items: stretch; background: #fff; }
.qat { display: flex; flex: none; align-items: center; gap: 4px; width: 161px; padding-left: 25px; background: #4e4e4e; }
.caption { display: flex; flex: 1; align-items: center; justify-content: center; gap: 12px; padding-bottom: 6px; color: #222; font: 9px/11px Roboto, sans-serif; }
.caption span { white-space: nowrap; }
.info { display: flex; flex: none; align-items: center; width: 298px; background: #4d4d4d; gap: 4px; padding-left: 4px; }
.play { width: 4px; height: 8px; background: #fff; clip-path: polygon(0 0, 100% 50%, 0 100%); }
.search { width: 118px; height: 18px; margin-bottom: 5px; background: #737373; border: 1px solid #383838; }
.search::placeholder { color: #c9c9c9; opacity: 1; }
.login { gap: 4px; }
.login-dn { margin-left: 34px; }
.help { margin-left: 6px; }
.winbtns { display: flex; flex: none; width: 107px; justify-content: flex-end; padding: 0 10px 5px 0; gap: 23px; }
.winbtns svg { width: 8px; height: 8px; }
.appbtn { position: absolute; left: 0; top: 0; width: 20px; height: 22px; justify-content: space-between; background: #6b6b6b; border: 1px solid #393939; border-left: 0; border-top: 0; }
.appbtn svg { width: 14px; height: 20px; }

.tabs { display: flex; flex: none; height: 14px; padding-left: 22px; background: #4a4a4a; color: #d2d2d2; }
.tabs button { padding: 0 6px 0 7px; line-height: 13px; }
.tabs .on { background: #686868; color: #fff; border: 1px solid #777; border-bottom: 0; padding: 0 6px; }
.tabs .mini { gap: 4px; margin-left: 9px; }
.mini span { width: 8px; height: 5px; background: #555; border: 2px solid #eee; border-radius: 1px; }

.ribbon { display: grid; flex: none; grid-template-columns: 126fr 46fr 90fr 62fr 97fr 41fr 97fr 76fr 116fr 169fr 44fr 39fr; background: #575757; border-bottom: 1px solid #686868; }
.panel { display: flex; flex-direction: column; min-width: 0; border-right: 1px solid #464646; }
.body { height: 56px; padding-top: 1px; overflow: hidden; }
.panel h2 { display: flex; align-items: center; justify-content: center; gap: 5px; height: 13px; margin: 0; background: #484848; font-size: 8px; font-weight: 400; color: #eee; white-space: nowrap; }
.corner { width: 3px; height: 3px; margin-left: 3px; border-right: 1px solid #ddd; border-bottom: 1px solid #ddd; background: #999; }
.panel .far { margin-left: 30px; }
.big { flex-direction: column; justify-content: flex-start; height: 54px; line-height: 11px; text-align: center; }
.big svg { width: 28px; height: 28px; }
.big .dn { margin-top: 2px; }
.rows { display: grid; grid-template-rows: repeat(3, 18px); }
.rows.end { align-items: center; }
.rows.end button { grid-row: 3; }
.model, .meshes, .select, .layer, .grp { display: flex; }
.model .big { width: 28px; }
.model .big + .big { margin-left: 6px; }
.model .rows { margin-left: 3px; }
.model .rows button { gap: 4px; justify-content: flex-start; }
.meshes .big { width: 27px; }
.meshes .rows { width: 16px; }
.wide { gap: 3px; justify-content: flex-start; }
.g-solid, .g-draw, .g-mod, .g-ucs { display: grid; grid-template-rows: repeat(3, 18px); align-items: center; justify-items: center; }
.g-solid { grid-template-columns: 18fr 18fr 43fr 10fr; }
.g-solid .wide { justify-self: start; padding-left: 2px; }
.g-draw { grid-template-columns: 17fr 16fr 18fr 9fr; }
.g-mod { grid-template-columns: 18fr 17fr 17fr 17fr 16fr 10fr; }
.g-ucs { grid-template-columns: 18fr 6fr 18fr 18fr 17fr 18fr; }
.span4 { grid-column: span 4; justify-self: stretch; margin: 0 3px 0 5px; }
.combo { display: flex; align-items: center; height: 14px; gap: 3px; padding: 0 2px 0 1px; background: linear-gradient(#424242, #606060); border: 1px solid #3c3c3c; }
.combo select { flex: 1; min-width: 0; appearance: none; height: 12px; line-height: 11px; }
.combo .i { width: 11px; height: 11px; }
.views { display: grid; grid-template-rows: repeat(3, 18px); align-items: center; }
.vp { padding-left: 2px; }
.vp .i { margin-right: 1px; }
.select { justify-content: space-between; padding: 1px 5px 0 4px; }
.select .big { flex: none; }
.select .big .dn { margin-top: 1px; }
.active { background: #547cb5; border: 1px solid #7298ca; }
.select .active { width: 25px; height: 51px; border-color: #3e6193; }
.select .active svg { width: 24px; height: 27px; }
.layer .big { width: 28px; }
.layer-tools { display: grid; flex: 1; grid-template-rows: repeat(3, 18px); align-items: center; padding-right: 2px; }
.layer-tools .combo { padding-left: 2px; }
.swatch { width: 9px; height: 9px; background: #fff; }
.strip { display: flex; gap: 4px; padding-left: 2px; }
.strip .wide { gap: 2px; }
.grp .big { width: 26px; }
.grp .rows { width: 15px; }
.grp .active { height: 16px; }
.one .big { width: 100%; }

.wm { position: absolute; left: 27px; top: 24px; display: flex; align-items: center; height: 36px; color: #fff; font: 700 27px/36px "Noto Sans CJK SC", sans-serif; font-style: italic; text-shadow: 3px 0 #2b2b2b, -3px 0 #2b2b2b, 0 3px #2b2b2b, 0 -3px #2b2b2b, 2px 2px #2b2b2b, -2px -2px #2b2b2b, 2px -2px #2b2b2b, -2px 2px #2b2b2b; white-space: nowrap; }
.wm .lat { font-family: "Open Sans", sans-serif; font-size: 28px; font-weight: 600; }
.wm svg { width: 18px; height: 34px; }

.files { display: flex; flex: none; height: 20px; padding: 1px 0 0 5px; background: #3a3a3a; border-bottom: 3px solid #5a5a5a; }
.file { width: 85px; justify-content: flex-start; padding-left: 9px; color: #aaa; background: linear-gradient(#5a5a5a, #454545); clip-path: polygon(7px 0, 80px 0, 100% 100%, 0 100%); }
.file.cur { width: 86px; padding-left: 6px; color: #fff; background: linear-gradient(#858585, #5a5a5a); justify-content: space-between; padding-right: 12px; }
.file.cur span { color: #333; }
.add { width: 16px; font-size: 12px; font-weight: 700; color: #ccc; }
.files .add { background: #484848; border-radius: 3px; }

.canvas { position: relative; flex: 1; min-height: 0; background: #000; overflow: hidden; }
.draw { width: 100%; height: 100%; }
.tip { position: absolute; padding: 0 8px 0 2px; height: 14px; line-height: 13px; color: #d5d5ee; background: #1c1660; white-space: nowrap; }
.tip.polar { left: 409px; top: 114px; }
.tip.angle { left: 472px; top: 135px; }
.dynin { position: absolute; left: 347px; top: 161px; width: 40px; height: 13px; padding: 0 1px; color: #fff; background: linear-gradient(#1c80dc, #1c80dc) 1px 1px / 32px 10px no-repeat #fff; }
.ucsicon { position: absolute; left: 0; bottom: 0; width: 50px; height: 56px; }
.docbtns { position: absolute; right: 4px; top: 6px; display: flex; gap: 5px; align-items: center; }
.docbtns svg { width: 8px; height: 8px; }
.docbtns .min { width: 8px; height: 3px; background: #fff; }
.viewcube { position: absolute; right: 11px; top: 31px; width: 68px; height: 70px; border: 9px solid #303030; border-radius: 50%; color: #bbb; font: 11px/13px "Noto Sans CJK SC", sans-serif; }
.viewcube span, .viewcube button { position: absolute; }
.viewcube button { left: 10px; top: 10px; width: 30px; height: 32px; background: #a9a9a9; color: #444; font-size: 18px; border: 1px solid #888; }
.n { left: 20px; top: -14px; }
.s { left: 20px; bottom: -14px; }
.w { left: -13px; top: 20px; }
.e { right: -13px; top: 20px; }
.wcs { position: absolute; right: 30px; top: 119px; width: 31px; height: 11px; gap: 6px; color: #546; background: #a8a8b4; border-radius: 3px; }
.wcs .dn { background: #c8c8d0; }
.navbar { position: absolute; right: 0; top: 148px; width: 21px; height: 145px; background: #414141; border-radius: 2px 0 0 2px; }
.history { position: absolute; left: 235px; bottom: 20px; display: grid; gap: 3px; justify-items: start; }
.history p { margin: 0; padding: 0 1px; height: 11px; background: #3d3d3d; color: #c0c0c0; font: 9px/11px "Liberation Mono", "Noto Sans CJK SC", monospace; white-space: nowrap; }
.history p:first-child { color: #999; }
.cmd { position: absolute; left: 195px; right: 236px; bottom: 0; display: flex; height: 18px; background: #fff; }
.cmdtools { display: flex; flex: none; width: 37px; align-items: center; gap: 6px; padding-left: 3px; background: #555; }
.cmdtools svg { width: 10px; height: 10px; }
.grip { width: 3px; height: 12px; border: 1px dotted #999; border-width: 0 1px; }
.cmdline { display: flex; align-items: center; gap: 4px; padding-left: 14px; color: #333; font: 9px/12px "Liberation Mono", "Noto Sans CJK SC", monospace; white-space: nowrap; }
.cmdline .dn { background: #888; }
.opts { display: flex; }
.cmdline button { background: #d4d4d4; }
.cmdline u { color: #3b2fae; text-decoration: none; }
.brand { position: absolute; right: 56px; bottom: 0; display: flex; align-items: center; gap: 13px; width: 180px; height: 84px; padding-left: 15px; background: #233158; color: #d5dbe8; }
.brand svg { width: 34px; height: 36px; }
.brand div { display: grid; }
.brand strong { font: 500 26px/28px "Noto Sans CJK SC", sans-serif; }
.brand small { font: 12px/14px "DejaVu Sans", sans-serif; }

.status { display: flex; flex: none; height: 15px; overflow: hidden; background: #383838; }
.layouts { display: flex; flex: none; width: 205px; height: 15px; }
.layouts button { width: 35px; background: #4d4d4d; color: #aaa; clip-path: polygon(0 0, 100% 0, 31px 100%, 5px 100%); }
.layouts .on { width: 32px; background: #777; color: #fff; font-weight: 700; }
.layouts .add { width: 26px; color: #ddd; }
.bar { display: flex; flex: 1; min-width: 0; align-items: center; height: 19px; background: #484848; border-left: 1px solid #5a5a5a; }
.coords { flex: none; width: 121px; padding-left: 12px; font-family: Roboto, sans-serif; white-space: nowrap; }
.space { width: 22px; color: #fff; font-weight: 700; }
.bar button { flex: none; }
.toggles { display: flex; flex: none; align-items: center; justify-content: space-between; width: 382px; }
.toggles button { width: 15px; }
.blue { color: #348fea; }
.scale { gap: 3px; width: 48px; }
.toggles.last { flex: 1; width: auto; padding-left: 2px; }
.unit { justify-content: space-between; }
.toggles .unit { width: 42px; }
.toggles .hw { width: 18px; background: #233f62; height: 19px; }
```
